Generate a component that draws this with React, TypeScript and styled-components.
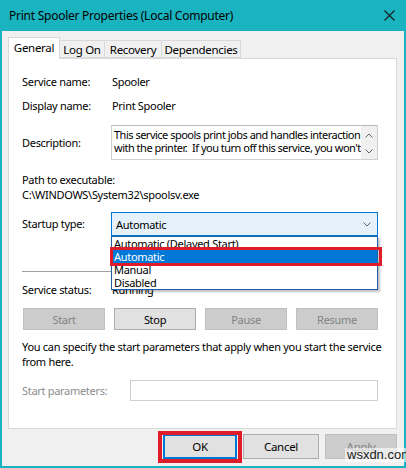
import styled, { createGlobalStyle } from "styled-components";

const GlobalStyle = createGlobalStyle`
  * { box-sizing: border-box; }
  body {
    margin: 0;
    background: #ffffff;
    font-family: "Noto Sans", "Open Sans", sans-serif;
    font-size: 11px;
    letter-spacing: -0.3px;
    color: #000000;
  }
`;

const tabs = ["General", "Log On", "Recovery", "Dependencies"];
const tabWidths = [52, 46, 58, 80];
const startupOptions = ["Automatic (Delayed Start)", "Automatic", "Manual", "Disabled"];

const Chevron = ({ up }: { up?: boolean }) => (
  <svg width="8" height="5" viewBox="0 0 8 5">
    <path
      d={up ? "M0.5 4.5 L4 1 L7.5 4.5" : "M0.5 0.5 L4 4 L7.5 0.5"}
      fill="none"
      stroke="#606060"
      strokeWidth="1"
    />
  </svg>
);

export default function App() {
  return (
    <>
      <GlobalStyle />
      <Window>
        <TitleBar>
          <Title>Print Spooler Properties (Local Computer)</Title>
          <CloseButton>
            <svg width="11" height="11" viewBox="0 0 11 11">
              <path d="M0.5 0.5 L10.5 10.5 M10.5 0.5 L0.5 10.5" stroke="#1a1a1a" strokeWidth="1.1" />
            </svg>
          </CloseButton>
        </TitleBar>

        <Body>
          <TabStrip>
            {tabs.map((t, i) => (
              <Tab key={t} $active={i === 0} $width={tabWidths[i]}>
                {t}
              </Tab>
            ))}
          </TabStrip>

          <Panel>
            <FieldRow $mt={0}>
              <Label>Service name:</Label>
              <Value>Spooler</Value>
            </FieldRow>
            <FieldRow $mt={8}>
              <Label>Display name:</Label>
              <Value>Print Spooler</Value>
            </FieldRow>
            <FieldRow $mt={11}>
              <Label>Description:</Label>
              <DescBox>
                <DescText>
                  <div>This service spools print jobs and handles interaction</div>
                  <div>with the printer.&nbsp; If you turn off this service, you won't</div>
                </DescText>
                <ScrollBar>
                  <Chevron up />
                  <Chevron />
                </ScrollBar>
              </DescBox>
            </FieldRow>

            <PathBlock>
              <div>Path to executable:</div>
              <div>C:\WINDOWS\System32\spoolsv.exe</div>
            </PathBlock>

            <FieldRow $mt={10}>
              <Label>Startup type:</Label>
              <SelectWrap>
                <SelectBox>
                  <span>Automatic</span>
                  <Chevron />
                </SelectBox>
                <DropList>
                  {startupOptions.map((o, i) => (
                    <DropItem key={o} $selected={i === 1}>
                      {o}
                      {i === 1 && <HighlightFrame />}
                    </DropItem>
                  ))}
                </DropList>
              </SelectWrap>
            </FieldRow>

            <Separator />

            <FieldRow $mt={10}>
              <Label>Service status:</Label>
              <Value>Running</Value>
            </FieldRow>

            <ServiceButtons>
              <PanelButton disabled>Start</PanelButton>
              <PanelButton>Stop</PanelButton>
              <PanelButton disabled>Pause</PanelButton>
              <PanelButton disabled>Resume</PanelButton>
            </ServiceButtons>

            <Note>
              <div>You can specify the start parameters that apply when you start the service</div>
              <div>from here.</div>
            </Note>

            <ParamsRow>
              <Label $disabled>Start parameters:</Label>
              <ParamsInput />
            </ParamsRow>
          </Panel>

          <DialogButtons>
            <DialogButton $width={74} $default>
              OK
              <RedFrame />
            </DialogButton>
            <DialogButton $width={76}>Cancel</DialogButton>
            <DialogButton $width={72} disabled>
              Apply
            </DialogButton>
          </DialogButtons>
        </Body>

        <Watermark>wsxdn.com</Watermark>
      </Window>
    </>
  );
}

const Window = styled.div`
  position: relative;
  width: 406px;
  height: 468px;
  background: #1ab3c0;
  padding: 0 2px 2px 2px;
  display: flex;
  flex-direction: column;
`;

const TitleBar = styled.div`
  height: 31px;
  display: flex;
  align-items: center;
  justify-content: space-between;
  padding: 0 8px 0 7px;
`;

const Title = styled.div`
  font-size: 12px;
  color: #000000;
  letter-spacing: -0.25px;
`;

const CloseButton = styled.div`
  width: 11px;
  height: 11px;
  display: flex;
  margin-right: 1px;
  margin-top: -1px;
`;

const Body = styled.div`
  flex: 1;
  background: #f0f0f0;
  padding: 6px 7px 0 6px;
  display: flex;
  flex-direction: column;
`;

const TabStrip = styled.div`
  height: 21px;
  display: flex;
  align-items: flex-end;
`;

const Tab = styled.div<{ $active?: boolean; $width: number }>`
  width: ${(p) => p.$width}px;
  height: ${(p) => (p.$active ? 22 : 18)}px;
  margin-bottom: ${(p) => (p.$active ? -1 : 0)}px;
  margin-left: -1px;
  &:first-child {
    margin-left: 0;
  }
  position: relative;
  z-index: ${(p) => (p.$active ? 2 : 1)};
  background: ${(p) => (p.$active ? "#ffffff" : "#f0f0f0")};
  border: 1px solid #d9d9d9;
  border-bottom: ${(p) => (p.$active ? "none" : "1px solid #d9d9d9")};
  display: flex;
  align-items: center;
  justify-content: center;
  padding-bottom: ${(p) => (p.$active ? 2 : 0)}px;
  font-size: 11.5px;
  white-space: nowrap;
`;

const Panel = styled.div`
  height: 371px;
  background: #ffffff;
  border: 1px solid #d9d9d9;
  padding: 15px 18px 0 13px;
  display: flex;
  flex-direction: column;
`;

const FieldRow = styled.div<{ $mt: number }>`
  margin-top: ${(p) => p.$mt}px;
  display: grid;
  grid-template-columns: 89px 1fr;
  align-items: center;
  min-height: 16px;
`;

const Label = styled.div<{ $disabled?: boolean }>`
  color: ${(p) => (p.$disabled ? "#8c8c8c" : "#000000")};
  line-height: 16px;
  white-space: nowrap;
`;

const Value = styled.div`
  padding-left: 1px;
  line-height: 16px;
`;

const DescBox = styled.div`
  height: 35px;
  border: 1px solid #cfcfcf;
  border-top-color: #b9b9b9;
  display: flex;
`;

const DescText = styled.div`
  flex: 1;
  min-width: 0;
  padding: 2px 0 0 2px;
  line-height: 13px;
  height: 32px;
  overflow: hidden;
  white-space: nowrap;
  letter-spacing: -0.5px;
`;

const ScrollBar = styled.div`
  width: 16px;
  background: #f0f0f0;
  display: flex;
  flex-direction: column;
  align-items: center;
  justify-content: space-between;
  padding: 7px 0 5px;
`;

const PathBlock = styled.div`
  margin-top: 12px;
  line-height: 15px;
`;

const SelectWrap = styled.div`
  position: relative;
`;

const SelectBox = styled.div`
  height: 24px;
  background: #e5f1fb;
  border: 1px solid #0078d7;
  display: flex;
  align-items: center;
  justify-content: space-between;
  padding: 0 6px 0 4px;
`;

const DropList = styled.div`
  position: absolute;
  top: 24px;
  left: 0;
  right: 0;
  z-index: 5;
  background: #ffffff;
  border: 1px solid #1f5fa6;
  box-shadow: 2px 2px 2px rgba(0, 0, 0, 0.25);
`;

const DropItem = styled.div<{ $selected?: boolean }>`
  position: relative;
  height: 13px;
  line-height: 13px;
  padding-left: 2px;
  background: ${(p) => (p.$selected ? "#0078d7" : "transparent")};
  color: ${(p) => (p.$selected ? "#ffffff" : "#000000")};
  white-space: nowrap;
`;

const HighlightFrame = styled.div`
  position: absolute;
  left: -2px;
  right: -5px;
  top: -3px;
  bottom: -3px;
  border: 3px solid #e01b2a;
`;

const Separator = styled.div`
  margin-top: 35px;
  height: 1px;
  background: #a0a0a0;
`;

const ServiceButtons = styled.div`
  margin: 10px 0 0 1px;
  display: grid;
  grid-template-columns: repeat(4, 1fr);
  gap: 9px;
`;

const PanelButton = styled.div<{ disabled?: boolean }>`
  height: 22px;
  display: flex;
  align-items: center;
  justify-content: center;
  background: ${(p) => (p.disabled ? "#cccccc" : "#e1e1e1")};
  border: 1px solid ${(p) => (p.disabled ? "#bfbfbf" : "#adadad")};
  color: ${(p) => (p.disabled ? "#838383" : "#000000")};
`;

const Note = styled.div`
  margin-top: 9px;
  line-height: 15px;
  white-space: nowrap;
`;

const ParamsRow = styled.div`
  margin-top: 11px;
  display: grid;
  grid-template-columns: 108px 1fr;
  align-items: center;
`;

const ParamsInput = styled.div`
  height: 21px;
  border: 1px solid #cfcfcf;
  background: #ffffff;
`;

const DialogButtons = styled.div`
  margin-top: 5px;
  display: flex;
  justify-content: flex-end;
  gap: 6px;
`;

const DialogButton = styled.div<{ $width: number; $default?: boolean; disabled?: boolean }>`
  position: relative;
  width: ${(p) => p.$width}px;
  height: 25px;
  display: flex;
  align-items: center;
  justify-content: center;
  font-size: 11.5px;
  background: ${(p) => (p.disabled ? "#cccccc" : "#e1e1e1")};
  border: ${(p) =>
    p.$default ? "2px solid #0078d7" : p.disabled ? "1px solid #bfbfbf" : "1px solid #adadad"};
  color: ${(p) => (p.disabled ? "#838383" : "#000000")};
`;

const RedFrame = styled.div`
  position: absolute;
  left: -7px;
  right: -7px;
  top: -5px;
  bottom: -6px;
  border: 4px solid #e01b2a;
`;

const Watermark = styled.div`
  position: absolute;
  left: 345px;
  top: 448px;
  padding: 0 2px;
  font-family: "Liberation Sans", Arial, sans-serif;
  font-size: 13px;
  line-height: 14px;
  letter-spacing: 0;
  color: #1a1a1a;
  background: rgba(255, 255, 255, 0.6);
`;
